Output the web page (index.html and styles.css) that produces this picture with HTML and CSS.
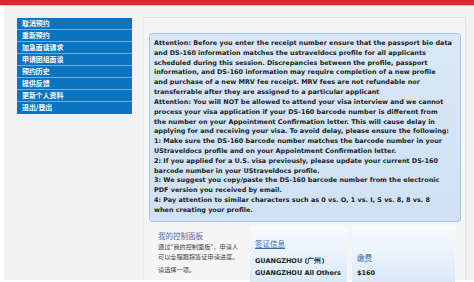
FILE: index.html
```html
<!DOCTYPE html>
<html>
<head>
<meta charset="utf-8">
<link rel="stylesheet" href="styles.css">
</head>
<body>
<div class="topbar"></div>
<div class="page">
  <aside class="side">
    <ul class="menu">
      <li>取消预约</li>
      <li>重新预约</li>
      <li>加急面谈请求</li>
      <li>申请团组面谈</li>
      <li>预约历史</li>
      <li>提供反馈</li>
      <li>更新个人资料</li>
      <li>退出/登出</li>
    </ul>
  </aside>
  <main class="main">
    <div class="notice">
      Attention: Before you enter the receipt number ensure that the passport bio data<br>and DS-160 information matches the ustraveldocs profile for all applicants<br>scheduled during this session. Discrepancies between the profile, passport<br>information, and DS-160 information may require completion of a new profile<br>and purchase of a new MRV fee receipt. MRV fees are not refundable nor<br>transferrable after they are assigned to a particular applicant<br>Attention: You will NOT be allowed to attend your visa interview and we cannot<br>process your visa application if your DS-160 barcode number is different from<br>the number on your Appointment Confirmation letter. This will cause delay in<br>applying for and receiving your visa. To avoid delay, please ensure the following:<br>1: Make sure the DS-160 barcode number matches the barcode number in your<br>UStraveldocs profile and on your Appointment Confirmation letter.<br>2: If you applied for a U.S. visa previously, please update your current DS-160<br>barcode number in your UStraveldocs profile.<br>3: We suggest you copy/paste the DS-160 barcode number from the electronic<br>PDF version you received by email.<br>4: Pay attention to similar characters such as 0 vs. O, 1 vs. I, S vs. 8, 8 vs. 8<br>when creating your profile.
    </div>
    <div class="dash">
      <div class="intro">
        <div class="intro-title">我的控制面板</div>
        <p>通过"我的控制面板"，申请人<br>可以全程跟踪签证申请进度。</p>
        <p>请选择一项。</p>
      </div>
      <div class="card">
        <a class="card-link" href="#">签证信息</a>
        <div class="card-val">GUANGZHOU (广州)</div>
        <div class="card-val">GUANGZHOU All Others</div>
      </div>
      <div class="card card-fee">
        <div class="card-title">缴费</div>
        <div class="card-val">$160</div>
      </div>
    </div>
  </main>
</div>
</body>
</html>
```

FILE: styles.css
```css
html, body {
  margin: 0;
  padding: 0;
  background: #ffffff;
  overflow: hidden;
}
body {
  width: 474px;
  height: 282px;
  font-family: "DejaVu Sans", Verdana, sans-serif;
}
.topbar {
  height: 5px;
  background: #d92a2e;
  border-bottom: 1px solid #f0b8b8;
}
.page {
  margin-left: 4px;
  height: 274px;
  display: flex;
  background: #f2f2f2;
}
.side {
  width: 139px;
  padding: 12px 0 0 13px;
  box-sizing: border-box;
}
.menu {
  list-style: none;
  margin: 0;
  padding: 0;
  width: 115px;
}
.menu li {
  height: 11px;
  line-height: 11px;
  background: #0b74c0;
  border-bottom: 1px solid #6fb0de;
  color: #ffffff;
  font-family: "Noto Sans CJK SC", sans-serif;
  font-weight: 700;
  font-size: 6.9px;
  padding-left: 5px;
}
.menu li:last-child {
  border-bottom: none;
  height: 12px;
}
.main {
  margin-top: 11px;
  width: 323px;
  background: #f5f5f5;
  border-top: 1px solid #e4e4e4;
  border-right: 1px solid #e4e4e4;
  border-left: 1px solid #ececec;
  padding: 15px 5px 0 5px;
  box-sizing: border-box;
}
.notice {
  width: 312px;
  box-sizing: border-box;
  background: linear-gradient(#d9e8f8, #cfe1f4);
  border: 1px solid #a8c5e5;
  border-radius: 3px;
  padding: 5px 2px 5px 4px;
  font-size: 6.45px;
  line-height: 9.82px;
  font-weight: 700;
  color: #222222;
  white-space: nowrap;
  overflow: hidden;
}
.dash {
  display: flex;
  margin-top: 5px;
  height: 60px;
}
.intro {
  width: 96px;
  padding: 4px 0 0 9px;
  font-family: "Noto Sans CJK SC", sans-serif;
  font-size: 6.2px;
  color: #444444;
  box-sizing: border-box;
  white-space: nowrap;
}
.intro-title {
  color: #4b6ea8;
  font-size: 7.5px;
  line-height: 10px;
}
.intro p {
  margin: 1px 0 3px;
  line-height: 10px;
}
.card {
  width: 97px;
  margin-left: 5px;
  background: linear-gradient(#f8fbff, #d8e7f8);
  padding: 12px 0 0 5px;
  box-sizing: border-box;
  font-size: 6.5px;
  font-weight: 700;
  color: #222222;
  white-space: nowrap;
}
.card-fee {
  width: 103px;
  padding-top: 26px;
}
.card-link {
  display: block;
  color: #3c67b0;
  font-family: "Noto Sans CJK SC", sans-serif;
  font-weight: 400;
  font-size: 7.5px;
  line-height: 10px;
  margin-bottom: 6px;
}
.card-title {
  color: #3c67b0;
  font-family: "Noto Sans CJK SC", sans-serif;
  font-weight: 400;
  font-size: 7.5px;
  line-height: 10px;
  margin-bottom: 4px;
}
.card-val {
  line-height: 12px;
}
```
